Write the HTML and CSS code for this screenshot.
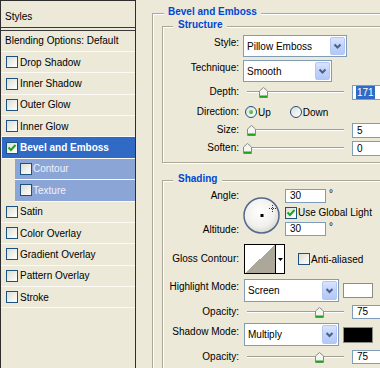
FILE: index.html
```html
<!DOCTYPE html>
<html>
<head>
<meta charset="utf-8">
<link rel="stylesheet" href="styles.css">
</head>
<body>
<div class="app">
  <aside class="styles-list">
    <div class="hdr">Styles</div>
    <div class="blend">Blending Options: Default</div>
    <div class="item"><span class="cb"></span>Drop Shadow</div>
    <div class="item"><span class="cb"></span>Inner Shadow</div>
    <div class="item"><span class="cb"></span>Outer Glow</div>
    <div class="item"><span class="cb"></span>Inner Glow</div>
    <div class="item sel"><span class="cb"><svg width="10" height="10" viewBox="0 0 10 10"><path d="M1.5 4.5L4 7L8.5 2" fill="none" stroke="#21a121" stroke-width="2"/></svg></span>Bevel and Emboss</div>
    <div class="item sub"><span class="cb"></span>Contour</div>
    <div class="item sub"><span class="cb"></span>Texture</div>
    <div class="item"><span class="cb"></span>Satin</div>
    <div class="item"><span class="cb"></span>Color Overlay</div>
    <div class="item"><span class="cb"></span>Gradient Overlay</div>
    <div class="item"><span class="cb"></span>Pattern Overlay</div>
    <div class="item"><span class="cb"></span>Stroke</div>
  </aside>

  <main class="dlg">
    <div class="group outer">
      <div class="gtitle">Bevel and Emboss</div>

      <div class="group inner structure">
        <div class="gtitle sub-title">Structure</div>

        <div class="row r-sel">
          <span class="lab lab-up">Style:</span>
          <div class="combo w-style"><span class="ctext">Pillow Emboss</span><span class="cbtn"><svg width="13" height="16" viewBox="0 0 13 16"><polyline points="3.5,6.5 6.5,9.5 9.5,6.5" fill="none" stroke="#4d6185" stroke-width="2"/></svg></span></div>
        </div>

        <div class="row r-sel r-tech">
          <span class="lab lab-up">Technique:</span>
          <div class="combo w-tech"><span class="ctext">Smooth</span><span class="cbtn"><svg width="13" height="16" viewBox="0 0 13 16"><polyline points="3.5,6.5 6.5,9.5 9.5,6.5" fill="none" stroke="#4d6185" stroke-width="2"/></svg></span></div>
        </div>

        <div class="row r-slide r-depth">
          <span class="lab">Depth:</span>
          <div class="slider"><div class="track"><span class="thumb" style="left:17.1%"><svg width="9" height="11" viewBox="0 0 9 11"><path d="M0.5 10.5V4L4.5 0.5L8.5 4V10.5Z" fill="#f4f4f0" stroke="#8a8b86"/><rect x="1" y="8.5" width="7" height="2" fill="#21a121"/></svg></span></div></div>
          <div class="num"><span class="hl">171</span></div>
        </div>

        <div class="row r-slide r-dir">
          <span class="lab">Direction:</span>
          <span class="radio on first"></span><span class="rtext">Up</span>
          <span class="radio second"></span><span class="rtext">Down</span>
        </div>

        <div class="row r-slide">
          <span class="lab">Size:</span>
          <div class="slider"><div class="track"><span class="thumb" style="left:5%"><svg width="9" height="11" viewBox="0 0 9 11"><path d="M0.5 10.5V4L4.5 0.5L8.5 4V10.5Z" fill="#f4f4f0" stroke="#8a8b86"/><rect x="1" y="8.5" width="7" height="2" fill="#21a121"/></svg></span></div></div>
          <div class="num">5</div>
        </div>

        <div class="row r-slide">
          <span class="lab">Soften:</span>
          <div class="slider"><div class="track"><span class="thumb" style="left:0%"><svg width="9" height="11" viewBox="0 0 9 11"><path d="M0.5 10.5V4L4.5 0.5L8.5 4V10.5Z" fill="#f4f4f0" stroke="#8a8b86"/><rect x="1" y="8.5" width="7" height="2" fill="#21a121"/></svg></span></div></div>
          <div class="num">0</div>
        </div>
      </div>

      <div class="group inner shading">
        <div class="gtitle sub-title">Shading</div>

        <div class="angle-grid">
          <span class="lab g-angle">Angle:</span>
          <div class="dial">
            <svg width="37" height="37" viewBox="0 0 37 37">
              <defs>
                <radialGradient id="dg" cx="45%" cy="40%" r="60%">
                  <stop offset="0" stop-color="#ffffff"/>
                  <stop offset="0.7" stop-color="#f1f0eb"/>
                  <stop offset="1" stop-color="#d9d8d0"/>
                </radialGradient>
              </defs>
              <circle cx="18.5" cy="18.5" r="17.5" fill="url(#dg)" stroke="#52688c" stroke-width="1.5"/>
              <rect x="17.5" y="17" width="3" height="3" fill="#000"/>
              <path d="M26 11.5H33M29.5 8V15" stroke="#333" stroke-width="1" stroke-dasharray="1 1"/>
            </svg>
          </div>
          <div class="g-in1"><div class="num small">30</div><span class="deg">°</span></div>
          <div class="g-cb"><span class="cb"><svg width="10" height="10" viewBox="0 0 10 10"><path d="M1.5 4.5L4 7L8.5 2" fill="none" stroke="#21a121" stroke-width="2"/></svg></span><span>Use Global Light</span></div>
          <span class="lab g-alt">Altitude:</span>
          <div class="g-in3"><div class="num small">30</div><span class="deg">°</span></div>
        </div>

        <div class="row r-gloss">
          <span class="lab">Gloss Contour:</span>
          <div class="contour"><span class="cswatch"></span><span class="carrow"><svg width="5" height="3" viewBox="0 0 5 3"><path d="M0 0H5L2.5 3Z" fill="#000"/></svg></span></div>
          <span class="cb aa"></span><span>Anti-aliased</span>
        </div>

        <div class="row r-mode r-hi">
          <span class="lab lab-up">Highlight Mode:</span>
          <div class="combo w-mode"><span class="ctext">Screen</span><span class="cbtn"><svg width="13" height="17" viewBox="0 0 13 17"><polyline points="3.5,7 6.5,10 9.5,7" fill="none" stroke="#4d6185" stroke-width="2"/></svg></span></div>
          <span class="swatch white"></span>
        </div>

        <div class="row r-op">
          <span class="lab">Opacity:</span>
          <div class="slider"><div class="track"><span class="thumb" style="left:75%"><svg width="9" height="11" viewBox="0 0 9 11"><path d="M0.5 10.5V4L4.5 0.5L8.5 4V10.5Z" fill="#f4f4f0" stroke="#8a8b86"/><rect x="1" y="8.5" width="7" height="2" fill="#21a121"/></svg></span></div></div>
          <div class="num op">75</div>
        </div>

        <div class="row r-mode r-sh">
          <span class="lab lab-up2">Shadow Mode:</span>
          <div class="combo w-mode"><span class="ctext">Multiply</span><span class="cbtn"><svg width="13" height="17" viewBox="0 0 13 17"><polyline points="3.5,7 6.5,10 9.5,7" fill="none" stroke="#4d6185" stroke-width="2"/></svg></span></div>
          <span class="swatch black"></span>
        </div>

        <div class="row r-op r-op2">
          <span class="lab">Opacity:</span>
          <div class="slider"><div class="track"><span class="thumb" style="left:75%"><svg width="9" height="11" viewBox="0 0 9 11"><path d="M0.5 10.5V4L4.5 0.5L8.5 4V10.5Z" fill="#f4f4f0" stroke="#8a8b86"/><rect x="1" y="8.5" width="7" height="2" fill="#21a121"/></svg></span></div></div>
          <div class="num op">75</div>
        </div>
      </div>
    </div>
  </main>
</div>
</body>
</html>
```

FILE: styles.css
```css
html, body {
  margin: 0;
  padding: 0;
  width: 380px;
  height: 368px;
  overflow: hidden;
  background: #ece9d8;
  font-family: "Liberation Sans", Arial, sans-serif;
  font-size: 10px;
  color: #000;
}

.app {
  display: flex;
  height: 368px;
}

/* ---------- left list ---------- */
.styles-list {
  flex: none;
  width: 136px;
  height: 368px;
  box-sizing: border-box;
  border-top: 1px solid #2e2e2e;
  border-left: 1px solid #2e2e2e;
  border-right: 1px solid #2e2e2e;
}

.hdr {
  height: 27px;
  box-sizing: border-box;
  padding: 10px 0 0 4px;
  line-height: 12px;
  border-bottom: 1px solid #3a3a3a;
}

.blend {
  margin-top: 2px;
  border-top: 1px solid #3a3a3a;
  border-bottom: 1px solid #fbfaf4;
  height: 20px;
  line-height: 20px;
  padding-left: 4px;
}

.item {
  display: flex;
  align-items: center;
  height: 20.36px;
  border-bottom: 1px solid #fbfaf4;
  padding-left: 5px;
  white-space: nowrap;
}

.item .cb {
  margin-right: 2px;
}

.item.sel {
  margin-left: 1px;
  padding-left: 4px;
  background: #316ac5;
  color: #fff;
  font-weight: bold;
}

.item.sub {
  margin-left: 14px;
  padding-left: 5px;
  background: #8ca5d7;
  color: #eef2fb;
}

.item.sub .cb {
  margin-right: 1px;
}

.cb {
  flex: none;
  display: inline-flex;
  align-items: center;
  justify-content: center;
  width: 12px;
  height: 12px;
  box-sizing: border-box;
  border: 1px solid #1c5180;
  background: linear-gradient(135deg, #dcdcd5 0%, #f2f2ee 60%, #ffffff 100%);
}

/* ---------- right dialog ---------- */
.dlg {
  flex: 1;
  overflow: hidden;
  padding-top: 13px;
}

.group {
  position: relative;
  border: 1px solid #aca899;
  box-shadow: inset 1px 1px 0 #fff, 1px 1px 0 #fff;
}

.outer {
  margin-left: 16px;
  width: 260px;
  height: 400px;
  box-sizing: border-box;
  padding: 12px 0 0 9px;
}

.gtitle {
  position: absolute;
  top: -8px;
  left: 11px;
  padding: 0 4px;
  line-height: 12px;
  background: #ece9d8;
  color: #0046d5;
  font-weight: bold;
  white-space: nowrap;
}

.gtitle.sub-title {
  left: 10px;
  padding: 0 5px;
}

.inner {
  width: 240px;
}

.structure {
  padding: 8px 0 5px 0;
}

.shading {
  margin-top: 17px;
  padding: 8px 0 10px 0;
}

.row {
  display: flex;
  align-items: center;
  white-space: nowrap;
}

.lab {
  flex: none;
  width: 76px;
  margin-right: 4px;
  text-align: right;
  line-height: 12px;
}

.lab-up {
  align-self: flex-start;
  padding-top: 2px;
}

.lab-up2 {
  align-self: flex-start;
  padding-top: 3px;
}

.r-sel { height: 22px; }
.r-tech { margin-top: 3px; }
.r-slide { height: 18px; }
.r-depth { margin-top: 1px; }
.r-dir { margin-top: 2px; }

/* combo box */
.combo {
  flex: none;
  display: flex;
  align-items: center;
  height: 100%;
  box-sizing: border-box;
  border: 1px solid #7f9db9;
  background: #fff;
  padding-left: 3px;
}

.w-style { width: 104px; }
.w-tech { width: 89px; }
.w-mode { width: 95px; margin-left: 1px; }

.ctext { flex: 1; }

.cbtn {
  flex: none;
  width: 15px;
  align-self: stretch;
  margin: 1px 1px 1px 0;
  box-sizing: border-box;
  border: 1px solid #b4c7f4;
  border-radius: 2px;
  background: linear-gradient(#d9e4fe, #c1d3fb 50%, #b3c8f7);
  display: flex;
  align-items: center;
  justify-content: center;
}

/* slider */
.slider {
  flex: none;
  position: relative;
  width: 105px;
  height: 100%;
}

.track {
  position: absolute;
  left: 4px;
  right: 4px;
  top: 50%;
  height: 2px;
  margin-top: -1px;
  box-sizing: border-box;
  border-top: 1px solid #a19f93;
  border-bottom: 1px solid #ffffff;
}

.thumb {
  position: absolute;
  top: -5px;
  margin-left: -4.5px;
  width: 9px;
  height: 11px;
  display: block;
}

.thumb svg { display: block; }

/* numeric input */
.num {
  flex: none;
  width: 40px;
  height: 15px;
  box-sizing: border-box;
  border: 1px solid #7f9db9;
  background: #fff;
  margin-left: 4px;
  padding-left: 4px;
  line-height: 13px;
}

.r-depth .num { padding-left: 3px; }

.hl {
  display: inline-block;
  background: #316ac5;
  color: #fff;
  padding: 0 1px;
  line-height: 13px;
}

.num.small {
  width: 41px;
  height: 14px;
  margin-left: 0;
  line-height: 12px;
}

.num.op { height: 14px; line-height: 12px; }

/* radio */
.radio {
  flex: none;
  display: inline-flex;
  align-items: center;
  justify-content: center;
  width: 12px;
  height: 12px;
  box-sizing: border-box;
  border: 1px solid #1c5180;
  border-radius: 50%;
  background: linear-gradient(135deg, #dcdcd5 0%, #f2f2ee 60%, #ffffff 100%);
}

.radio.on::after {
  content: "";
  width: 4px;
  height: 4px;
  border-radius: 50%;
  background: radial-gradient(circle at 35% 35%, #6fd66f, #21a121);
}

.radio.first { margin-left: 2px; }
.radio.second { margin-left: 19px; }
.rtext { margin-left: 1px; }

/* angle block */
.angle-grid {
  display: grid;
  grid-template-columns: 76px 4px 37px 5px 1fr;
  grid-template-rows: 14px 13px 14px;
  row-gap: 3px;
  white-space: nowrap;
}

.g-angle { grid-column: 1; grid-row: 1; align-self: center; margin: 0; }
.g-alt { grid-column: 1; grid-row: 3; align-self: end; margin: 0; }

.dial {
  grid-column: 3;
  grid-row: 1 / 4;
  align-self: start;
  margin-top: 8px;
  height: 37px;
}

.dial svg { display: block; }

.g-in1, .g-in3 {
  grid-column: 5;
  display: flex;
  align-items: flex-start;
}

.g-in1 { grid-row: 1; }
.g-in3 { grid-row: 3; }

.deg {
  margin-left: 3px;
  line-height: 9px;
}

.g-cb {
  grid-column: 5;
  grid-row: 2;
  display: flex;
  align-items: center;
}

.g-cb .cb { margin-right: 1px; }

/* gloss contour */
.r-gloss {
  margin-top: 8px;
  height: 30px;
}

.contour {
  flex: none;
  display: flex;
  width: 41px;
  height: 30px;
  margin-left: 1px;
  box-sizing: border-box;
  border: 1px solid #000;
  background: #fff;
}

.cswatch {
  width: 30px;
  background: linear-gradient(to top left, #aca899 50%, #ffffff 50%);
}

.carrow {
  flex: 1;
  border-left: 1px solid #000;
  display: flex;
  align-items: center;
  justify-content: center;
}

.carrow svg { display: block; }

.cb.aa {
  margin-left: 13px;
  margin-right: 1px;
}

/* modes */
.r-mode { height: 23px; }
.r-hi { margin-top: 5px; }
.r-sh { margin-top: 2px; }

.swatch {
  flex: none;
  width: 30px;
  margin-left: 4px;
  box-sizing: border-box;
  border: 1px solid #8c8c86;
}

.swatch.white { height: 15px; background: #fff; }
.swatch.black { height: 16px; background: #000; }

.r-op { height: 19px; }
.r-op2 { margin-top: 1px; }
```
